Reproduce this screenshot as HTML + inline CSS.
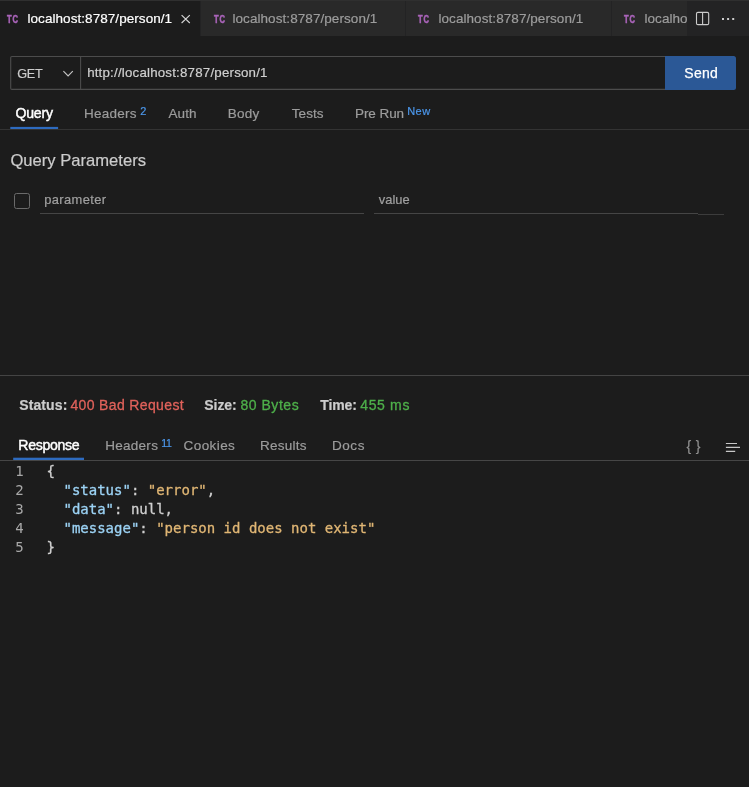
<!DOCTYPE html>
<html><head><meta charset="utf-8"><title>Thunder Client</title>
<style>
html,body{margin:0;padding:0;background:#1c1c1c;}
body{width:749px;height:787px;position:relative;overflow:hidden;font-family:"Liberation Sans",sans-serif;color:#ccc;}
.abs{position:absolute;}
.t{position:absolute;white-space:nowrap;line-height:20px;font-family:"Liberation Sans",sans-serif;-webkit-text-stroke:0.2px;}
.c{position:absolute;white-space:pre;line-height:19px;font-size:14px;font-family:"DejaVu Sans Mono","Liberation Mono",monospace;color:#cfcfcf;-webkit-text-stroke:0.3px;}
.k{color:#9cd3f5;}.s{color:#e0b674;}
#layer{position:absolute;left:0;top:0;width:749px;height:787px;will-change:transform;}
</style></head><body><div id="layer">
<!-- tab bar -->
<div class="abs" style="left:0;top:0;width:749px;height:36px;background:#232324;"></div>
<div class="abs" style="left:0;top:0;width:200px;height:36px;background:#1c1c1c;"></div>
<div class="abs" style="left:201px;top:0;width:204px;height:36px;background:#292929;"></div>
<div class="abs" style="left:406px;top:0;width:205px;height:36px;background:#292929;"></div>
<div class="abs" style="left:612px;top:0;width:137px;height:36px;background:#292929;"></div>
<div id="tl1" class="t" style="left:27.46px;top:9px;font-size:13.5px;color:#ffffff;letter-spacing:0.060px;">localhost:8787/person/1</div>
<div id="tl2" class="t" style="left:232.44px;top:9px;font-size:13.5px;color:#9d9d9d;letter-spacing:0.068px;">localhost:8787/person/1</div>
<div id="tl3" class="t" style="left:438.44px;top:9px;font-size:13.5px;color:#9d9d9d;letter-spacing:0.068px;">localhost:8787/person/1</div>
<div id="tl4" class="t" style="left:644.44px;top:9px;font-size:13.5px;color:#9d9d9d;letter-spacing:0.068px;">localhost:8787/person/1</div>
<div id="tc1" class="t" style="left:7.06px;top:9px;font-size:10.6px;color:#aa64ba;letter-spacing:1.200px;font-weight:bold;-webkit-text-stroke:0.55px #aa64ba;transform:scaleX(0.7174);transform-origin:0 0;">TC</div>
<div id="tc2" class="t" style="left:213.66px;top:9px;font-size:10.6px;color:#aa64ba;letter-spacing:1.200px;font-weight:bold;-webkit-text-stroke:0.55px #aa64ba;transform:scaleX(0.7174);transform-origin:0 0;">TC</div>
<div id="tc3" class="t" style="left:417.86px;top:9px;font-size:10.6px;color:#aa64ba;letter-spacing:1.200px;font-weight:bold;-webkit-text-stroke:0.55px #aa64ba;transform:scaleX(0.7173);transform-origin:0 0;">TC</div>
<div id="tc4" class="t" style="left:623.86px;top:9px;font-size:10.6px;color:#aa64ba;letter-spacing:1.200px;font-weight:bold;-webkit-text-stroke:0.55px #aa64ba;transform:scaleX(0.7173);transform-origin:0 0;">TC</div>
<div class="abs" style="left:687px;top:0;width:62px;height:36px;background:#232324;"></div>
<div class="abs" style="left:0;top:0;width:749px;height:1px;background:#2f2f2f;"></div>
<svg class="abs" style="left:179px;top:12px" width="14" height="14" viewBox="0 0 14 14"><path d="M2.6 3.2 L10.8 11 M10.8 3.2 L2.6 11" stroke="#d4d4d4" stroke-width="1.15" fill="none"/></svg>
<svg class="abs" style="left:694px;top:10px" width="18" height="18" viewBox="0 0 18 18"><rect x="2.5" y="2.4" width="12.2" height="12.2" rx="1.4" fill="none" stroke="#cccccc" stroke-width="1.1"/><path d="M8.6 2.4V14.6" stroke="#cccccc" stroke-width="1.1"/></svg>
<div class="abs" style="left:722px;top:18px;width:2.2px;height:2.2px;background:#cccccc;box-shadow:5.1px 0 0 #cccccc,10.2px 0 0 #cccccc;"></div>

<!-- request row -->
<svg class="abs" style="left:0;top:50px" width="749" height="45" viewBox="0 50 749 45"><path d="M665 56.5H11.9a1.2 1.2 0 0 0 -1.2 1.2V88.2a1.2 1.2 0 0 0 1.2 1.2H665M80.6 56.5V89.4" fill="none" stroke="#4c4c4c" stroke-width="1.1"/></svg>
<svg class="abs" style="left:61px;top:68px" width="14" height="11" viewBox="0 0 14 11"><path d="M2.4 3.2 L7.1 7.9 L11.8 3.2" stroke="#c4c4c4" stroke-width="1.15" fill="none"/></svg>
<div class="abs" style="left:665px;top:56px;width:71px;height:34px;background:#2b5896;border-radius:0 2.5px 2.5px 0;"></div>

<!-- request tabs -->
<div class="abs" style="left:0;top:129px;width:749px;height:1px;background:#333333;"></div>
<svg class="abs" style="left:0;top:125px" width="100" height="6" viewBox="0 125 100 6"><rect x="10.3" y="126.9" width="47.8" height="2.1" fill="#2e6bbf"/></svg>

<!-- params -->
<div class="abs" style="left:14px;top:193px;width:16px;height:16px;box-sizing:border-box;border:1px solid #6a6a6a;border-radius:2.5px;"></div>
<div class="abs" style="left:40px;top:213px;width:324px;height:1px;background:#454545;"></div>
<div class="abs" style="left:374px;top:213px;width:324px;height:1px;background:#454545;"></div>
<div class="abs" style="left:698px;top:214px;width:26px;height:1px;background:#3c3c3c;"></div>

<!-- divider -->
<div class="abs" style="left:0;top:375px;width:749px;height:1px;background:#444444;"></div>

<!-- response tabs -->
<div class="abs" style="left:0;top:460px;width:749px;height:1px;background:#464646;"></div>
<svg class="abs" style="left:0;top:455px" width="100" height="6" viewBox="0 455 100 6"><rect x="13.2" y="457.7" width="70.8" height="2.3" fill="#2e6bbf"/></svg>
<div class="t" style="left:686.4px;top:436px;font-size:14px;color:#8f8f8f;letter-spacing:4.6px;-webkit-text-stroke:0.2px;">{}</div>
<svg class="abs" style="left:724px;top:440px" width="18" height="14" viewBox="0 0 18 14"><path d="M1.9 3.5H13M1.9 7.4H16M1.9 11.4H11.2" stroke="#c8c8c8" stroke-width="1.2"/></svg>
<div id="get" class="t" style="left:17.25px;top:64px;font-size:12.7px;color:#cccccc;letter-spacing:-0.350px;">GET</div>
<div id="url" class="t" style="left:87.14px;top:63px;font-size:13.3px;color:#d0d0d0;letter-spacing:0.203px;">http://localhost:8787/person/1</div>
<div id="send" class="t" style="left:684.35px;top:63px;font-size:14px;color:#ffffff;letter-spacing:0.211px;-webkit-text-stroke:0.25px #fff;">Send</div>
<div id="q" class="t" style="left:15.46px;top:103px;font-size:14.1px;color:#ffffff;letter-spacing:-0.218px;-webkit-text-stroke:0.45px #fff;">Query</div>
<div id="h" class="t" style="left:83.91px;top:104px;font-size:13.5px;color:#9c9c9c;letter-spacing:0.277px;">Headers</div>
<div id="h2" class="t" style="left:140.16px;top:101px;font-size:11px;color:#4b96ea;letter-spacing:0.000px;">2</div>
<div id="au" class="t" style="left:168.49px;top:104px;font-size:13.5px;color:#9c9c9c;letter-spacing:0.112px;">Auth</div>
<div id="bo" class="t" style="left:227.81px;top:104px;font-size:13.5px;color:#9c9c9c;letter-spacing:0.205px;">Body</div>
<div id="te" class="t" style="left:291.72px;top:104px;font-size:13.5px;color:#9c9c9c;letter-spacing:0.084px;">Tests</div>
<div id="pr" class="t" style="left:355.04px;top:104px;font-size:13.5px;color:#9c9c9c;letter-spacing:-0.080px;">Pre Run</div>
<div id="nw" class="t" style="left:407.16px;top:101px;font-size:11px;color:#4b96ea;letter-spacing:0.456px;">New</div>
<div id="qp" class="t" style="left:10.44px;top:151px;font-size:16.6px;color:#cccccc;letter-spacing:-0.001px;">Query Parameters</div>
<div id="pa" class="t" style="left:44.16px;top:190px;font-size:12.9px;color:#a0a0a0;letter-spacing:0.402px;">parameter</div>
<div id="va" class="t" style="left:378.68px;top:190px;font-size:12.9px;color:#a0a0a0;letter-spacing:0.046px;">value</div>
<div id="st" class="t" style="left:19.30px;top:395px;font-size:14px;color:#cccccc;letter-spacing:0.092px;font-weight:bold;">Status:</div>
<div id="stv" class="t" style="left:70.38px;top:395px;font-size:14px;color:#e0625b;letter-spacing:0.363px;-webkit-text-stroke:0.3px #e0625b;">400 Bad Request</div>
<div id="sz" class="t" style="left:204.30px;top:395px;font-size:14px;color:#cccccc;letter-spacing:-0.073px;font-weight:bold;">Size:</div>
<div id="szv" class="t" style="left:240.41px;top:395px;font-size:14px;color:#4eb04a;letter-spacing:0.539px;-webkit-text-stroke:0.3px #4eb04a;">80 Bytes</div>
<div id="ti" class="t" style="left:320.17px;top:395px;font-size:14px;color:#cccccc;letter-spacing:-0.068px;font-weight:bold;">Time:</div>
<div id="tiv" class="t" style="left:360.19px;top:395px;font-size:14px;color:#4eb04a;letter-spacing:0.659px;-webkit-text-stroke:0.3px #4eb04a;">455 ms</div>
<div id="re" class="t" style="left:18.29px;top:435px;font-size:14.1px;color:#ffffff;letter-spacing:-0.308px;-webkit-text-stroke:0.45px #fff;">Response</div>
<div id="rh" class="t" style="left:105.17px;top:436px;font-size:13.5px;color:#9c9c9c;letter-spacing:0.283px;">Headers</div>
<div id="r11" class="t" style="left:161.16px;top:433px;font-size:10.6px;color:#4b96ea;letter-spacing:-0.300px;">11</div>
<div id="co" class="t" style="left:183.58px;top:436px;font-size:13.5px;color:#9c9c9c;letter-spacing:0.410px;">Cookies</div>
<div id="rs" class="t" style="left:259.91px;top:436px;font-size:13.5px;color:#9c9c9c;letter-spacing:0.269px;">Results</div>
<div id="do" class="t" style="left:331.91px;top:436px;font-size:13.5px;color:#9c9c9c;letter-spacing:0.593px;">Docs</div>
<!-- code -->
<div class="c" style="left:15.2px;top:462px;color:#a8a8a8;-webkit-text-stroke:0;">1
2
3
4
5</div>
<div class="c" style="left:46.6px;top:462px;">{
  <span class="k">"status"</span>: <span class="s">"error"</span>,
  <span class="k">"data"</span>: null,
  <span class="k">"message"</span>: <span class="s">"person id does not exist"</span>
}</div>
</div></body></html>
